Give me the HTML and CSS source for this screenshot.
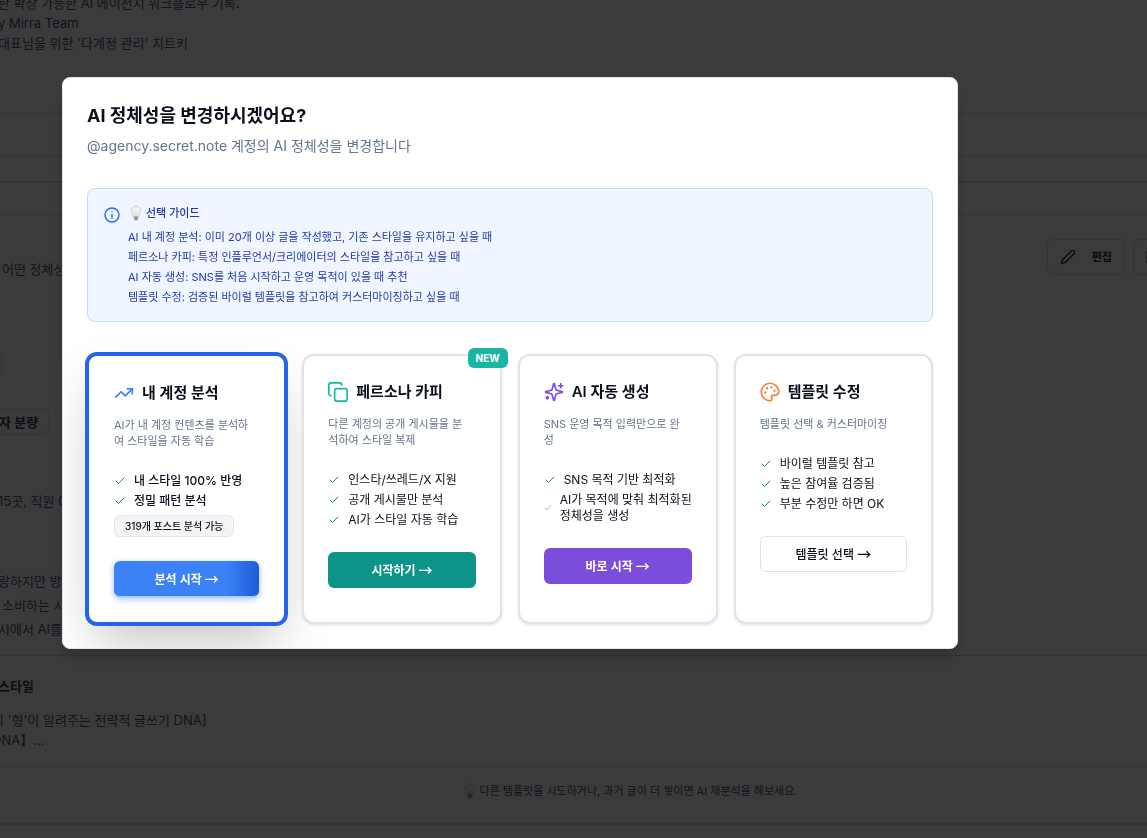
FILE: index.html
```html
<!DOCTYPE html>
<html lang="ko">

<head>
    <meta charset="UTF-8">
    <meta name="viewport" content="width=device-width, initial-scale=1.0">
    <title>AI 정체성 변경</title>
    <link rel="stylesheet" href="styles.css">
</head>

<body>

    <!-- shared icons -->
    <svg class="sprite" aria-hidden="true">
        <symbol id="check" viewBox="0 0 24 24"><path d="M20 6 9 17l-5-5"/></symbol>
        <symbol id="bulb" viewBox="0 0 24 32">
            <path d="M12 2a9 9 0 0 0-9 9c0 5 4 7 4 12h10c0-5 4-7 4-12a9 9 0 0 0-9-9z" fill="#f4f4f4" stroke="#bdbdbd" stroke-width="1.5"/>
            <path d="M9 12l2 10M15 12l-2 10" fill="none" stroke="#c8c8c8" stroke-width="1.2"/>
            <path d="M8 23h8v5l-2 3h-4l-2-3z" fill="#9b9b9b" stroke="none"/>
            <path d="M8 26h8" stroke="#6f6f6f" stroke-width="1"/>
        </symbol>
    </svg>

    <main class="page">
        <section class="intro">
            <p>한 확장 가능한 AI 에이전시 워크플로우 기록.</p>
            <p>y Mirra Team</p>
            <p>대표님을 위한 '다계정 관리' 치트키</p>
        </section>
        <div class="row row-tall"></div>
        <div class="row row-short"></div>
        <div class="row row-mid"></div>

        <section class="identity">
            <div class="identity-head">
                <p>어떤 정체성</p>
                <div class="actions">
                    <button type="button">
                        <svg class="icon" viewBox="0 0 24 24"><path d="M17 3a2.8 2.8 0 1 1 4 4L7.500 20.500 2 22l1.500-5.500z"/></svg>
                        편집
                    </button>
                    <button type="button" aria-label="저장">
                        <svg class="icon" viewBox="0 0 24 24"><path d="M2 4h20v16H2z"/></svg>
                    </button>
                </div>
            </div>
            <div class="tags">
                <span class="tag tag-cut"></span>
                <span class="tag">자 분량</span>
            </div>
            <p class="fact">15곳, 직원 0</p>
            <div class="story">
                <p>랑하지만 방향</p>
                <p class="inset">소비하는 시</p>
                <p>시에서 AI를</p>
            </div>
        </section>

        <section class="style">
            <h3>스타일</h3>
            <p>의 '형'이 알려주는 전략적 글쓰기 DNA]</p>
            <p>DNA】...</p>
        </section>

        <footer class="tip">
            <svg class="bulb"><use href="#bulb"/></svg>
            다른 템플릿을 시도하거나, 과거 글이 더 쌓이면 AI 재분석을 해보세요.
        </footer>
    </main>

    <div class="overlay">
        <div class="modal" role="dialog" aria-labelledby="modalTitle">
            <h2 id="modalTitle">AI 정체성을 변경하시겠어요?</h2>
            <p class="subtitle">@agency.secret.note 계정의 AI 정체성을 변경합니다</p>

            <div class="guide">
                <svg class="icon" viewBox="0 0 24 24"><circle cx="12" cy="12" r="10.500"/><path d="M12 17v-6M12 7.500v.01"/></svg>
                <div>
                    <h4><svg class="bulb"><use href="#bulb"/></svg>선택 가이드</h4>
                    <p>AI 내 계정 분석: 이미 20개 이상 글을 작성했고, 기존 스타일을 유지하고 싶을 때</p>
                    <p>페르소나 카피: 특정 인플루언서/크리에이터의 스타일을 참고하고 싶을 때</p>
                    <p>AI 자동 생성: SNS를 처음 시작하고 운영 목적이 있을 때 추천</p>
                    <p>템플릿 수정: 검증된 바이럴 템플릿을 참고하여 커스터마이징하고 싶을 때</p>
                </div>
            </div>

            <div class="cards">
                <article class="card selected">
                    <h3>
                        <svg class="icon blue" viewBox="0 0 24 24"><path d="M22 7l-8.500 8.500-5-5L2 17"/><path d="M16 7h6v6"/></svg>
                        내 계정 분석
                    </h3>
                    <p class="desc">AI가 내 계정 컨텐츠를 분석하<br>여 스타일을 자동 학습</p>
                    <ul class="strong">
                        <li><svg class="check"><use href="#check"/></svg>내 스타일 100% 반영</li>
                        <li><svg class="check"><use href="#check"/></svg>정밀 패턴 분석</li>
                    </ul>
                    <span class="count">319개 포스트 분석 가능</span>
                    <button type="button" class="btn btn-blue">분석 시작 <span class="arrow">→</span></button>
                </article>

                <article class="card">
                    <span class="new">NEW</span>
                    <h3>
                        <svg class="icon teal" viewBox="0 0 24 24"><rect x="8" y="8" width="15" height="15" rx="2.500"/><path d="M4 16.500c-1.400 0-3-1.400-3-3V4c0-1.600 1.400-3 3-3h9.500c1.600 0 3 1.400 3 3"/></svg>
                        페르소나 카피
                    </h3>
                    <p class="desc">다른 계정의 공개 게시물을 분<br>석하여 스타일 복제</p>
                    <ul>
                        <li><svg class="check"><use href="#check"/></svg>인스타/쓰레드/X 지원</li>
                        <li><svg class="check"><use href="#check"/></svg>공개 게시물만 분석</li>
                        <li><svg class="check"><use href="#check"/></svg>AI가 스타일 자동 학습</li>
                    </ul>
                    <button type="button" class="btn btn-teal">시작하기 <span class="arrow">→</span></button>
                </article>

                <article class="card">
                    <h3>
                        <svg class="icon purple" viewBox="0 0 24 24"><path d="M9.900 15.500A2 2 0 0 0 8.500 14.100l-6.100-1.600a.5.5 0 0 1 0-1L8.500 9.900A2 2 0 0 0 9.900 8.500l1.600-6.100a.5.5 0 0 1 1 0L14.100 8.500A2 2 0 0 0 15.500 9.900l6.100 1.600a.5.5 0 0 1 0 1L15.500 14.100a2 2 0 0 0-1.400 1.400l-1.600 6.100a.5.5 0 0 1-1 0z"/><path d="M20 2v5M22.500 4.500h-5"/><circle cx="4" cy="19" r="1.200"/></svg>
                        AI 자동 생성
                    </h3>
                    <p class="desc">SNS 운영 목적 입력만으로 완<br>성</p>
                    <ul>
                        <li><svg class="check"><use href="#check"/></svg>SNS 목적 기반 최적화</li>
                        <li><svg class="check check-small"><use href="#check"/></svg><span>AI가 목적에 맞춰 최적화된<br>정체성을 생성</span></li>
                    </ul>
                    <button type="button" class="btn btn-purple">바로 시작 <span class="arrow">→</span></button>
                </article>

                <article class="card">
                    <h3>
                        <svg class="icon orange" viewBox="0 0 24 24"><path d="M12 22.500a10.500 10.500 0 1 1 10.500-11c0 3-2.500 4.500-5 4.500h-2.200c-1.800 0-2.300 1.800-1.300 3 .9 1.200.5 3.500-2 3.500z"/><path d="M13.500 6.500v.01M17.500 10.500v.01M8.500 7.500v.01M6.500 12.500v.01" stroke-width="2.800"/></svg>
                        템플릿 수정
                    </h3>
                    <p class="desc">템플릿 선택 &amp; 커스터마이징</p>
                    <ul>
                        <li><svg class="check"><use href="#check"/></svg>바이럴 템플릿 참고</li>
                        <li><svg class="check"><use href="#check"/></svg>높은 참여율 검증됨</li>
                        <li><svg class="check"><use href="#check"/></svg>부분 수정만 하면 OK</li>
                    </ul>
                    <button type="button" class="btn btn-outline">템플릿 선택 <span class="arrow">→</span></button>
                </article>
            </div>
        </div>
    </div>

</body>

</html>
```

FILE: styles.css
```css
* {
    box-sizing: border-box;
}

body {
    margin: 0;
    overflow: hidden;
    background-color: #fff;
    color: #0a0f1c;
    font-family: Inter, "Noto Sans CJK KR", sans-serif;
    font-size: 12px;
    line-height: 16px;
}

h2, h3, h4, p, ul {
    margin: 0;
    padding: 0;
}

button {
    font: inherit;
    cursor: pointer;
}

svg {
    flex-shrink: 0;
    fill: none;
    stroke: currentColor;
    stroke-width: 2;
    stroke-linecap: round;
    stroke-linejoin: round;
}

.sprite {
    position: absolute;
    width: 0;
    height: 0;
}

.icon {
    width: 20px;
    height: 20px;
}

.bulb {
    width: 12px;
    height: 16px;
}

/* page behind the dialog, scrolled part way */
.page {
    margin-top: -7px;
    overflow: hidden;
    color: #475780;
    font-size: 13px;
    line-height: 20px;
    white-space: nowrap;
}

.page p {
    margin-left: -2px;
}

.intro {
    height: 121px;
    border-bottom: 1px solid #dcdcdc;
}

.row {
    border-bottom: 1px solid #dcdcdc;
}

.row-tall {
    height: 43px;
}

.row-short {
    height: 26px;
    border-bottom-width: 2px;
}

.row-mid {
    height: 32px;
}

.identity {
    padding-top: 24px;
    height: 441px;
    border-bottom: 1px solid #dcdcdc;
}

.identity-head {
    display: flex;
    justify-content: space-between;
    align-items: center;
    height: 36px;
}

.identity-head p {
    margin: 24px 0 0 2px;
}

.actions {
    display: flex;
    gap: 8px;
    margin-right: -28px;
}

.actions button {
    display: flex;
    align-items: center;
    gap: 16px;
    height: 36px;
    padding: 0 12px;
    border: 1px solid #dcdcdc;
    border-radius: 6px;
    background: none;
    color: #1f2f55;
    font-size: 11px;
    font-weight: 600;
}

.actions .icon {
    width: 16px;
    height: 16px;
}

.tags {
    display: flex;
    flex-direction: column;
    align-items: flex-start;
    gap: 32px;
    margin: 76px 0 0 -8px;
}

.tag {
    padding: 2px 10px 2px 6px;
    border: 1px solid #dcdcdc;
    border-radius: 6px;
    color: #2c3c64;
    font-weight: 600;
}

.tag-cut {
    height: 26px;
    padding: 0 4px;
}

.fact {
    padding-top: 56px;
}

.story {
    padding-top: 58px;
    line-height: 24px;
}

.page .inset {
    margin-left: 2px;
}

.style {
    height: 111px;
    padding-top: 20px;
    border-bottom: 1px solid #dcdcdc;
}

.style h3 {
    margin: 0 0 14px -2px;
    color: #2c3c64;
    font-size: 13px;
}

.page .style p {
    margin-left: -8px;
}

.tip {
    display: flex;
    justify-content: center;
    align-items: center;
    gap: 4px;
    height: 58px;
    padding: 0 16px 8px 130px;
    border-bottom: 2px solid #dcdcdc;
    font-size: 11px;
}

/* dialog */
.overlay {
    position: fixed;
    inset: 0;
    padding: 77px 62px;
    background-color: rgba(0, 0, 0, 0.77);
}

.modal {
    max-width: 896px;
    padding: 24px;
    border: 1px solid #e2e4f0;
    border-radius: 8px;
    background-color: #fff;
    box-shadow: 0 10px 15px -3px rgba(0, 0, 0, 0.2);
    overflow: hidden;
}

.modal h2 {
    font-size: 18px;
    line-height: 28px;
    font-weight: 700;
}

.subtitle {
    margin-top: 6px;
    color: #64748b;
    font-size: 14px;
    line-height: 20px;
}

.guide {
    display: flex;
    gap: 8px;
    margin: 32px 0;
    padding: 16px 16px 14px;
    border: 1px solid #bfdbfe;
    border-radius: 8px;
    background-color: #eff6ff;
    color: #2438a8;
    font-size: 11px;
}

.guide .icon {
    width: 16px;
    height: 16px;
    margin-top: 2px;
    color: #2563eb;
}

.guide h4 {
    display: flex;
    gap: 4px;
    align-items: center;
    margin: 0 0 6px 2px;
    font-size: 11px;
    line-height: 16px;
    font-weight: 500;
}

.guide p {
    line-height: 20px;
}

.cards {
    display: grid;
    grid-template-columns: repeat(4, 1fr);
    gap: 16px;
}

.card {
    position: relative;
    padding: 24px 24px 26px;
    border: 2px solid #e2e2ee;
    border-radius: 12px;
    background-color: #fff;
    box-shadow: 0 1px 3px rgba(0, 0, 0, 0.12);
}

.card.selected {
    margin: -2px;
    padding: 25px;
    border: 4px solid #2563eb;
    box-shadow: 0 25px 50px -12px rgba(0, 0, 0, 0.25);
}

.card h3 {
    display: flex;
    align-items: center;
    gap: 8px;
    margin-bottom: 12px;
    font-size: 15px;
    line-height: 24px;
    font-weight: 600;
}

.blue { color: #3b82f6; }
.teal { color: #14b8a6; }
.purple { color: #7c4ddb; }
.orange { color: #f97f36; }

.desc {
    color: #64748b;
    font-size: 11px;
    white-space: nowrap;
}

.card ul {
    display: flex;
    flex-direction: column;
    gap: 4px;
    margin-top: 24px;
    list-style: none;
    white-space: nowrap;
}

.card li {
    display: flex;
    align-items: center;
    gap: 8px;
}

.strong {
    font-weight: 500;
}

.check {
    width: 12px;
    height: 12px;
    color: #16934a;
}

.check-small {
    width: 8px;
    height: 8px;
    color: #7d8a86;
}

.count {
    display: inline-block;
    margin-top: 6px;
    padding: 2px 10px;
    border: 1px solid #e2e4ea;
    border-radius: 6px;
    background-color: #f3f4f6;
    font-size: 10px;
    font-weight: 500;
}

.new {
    position: absolute;
    top: -8px;
    right: -8px;
    padding: 2px 8px;
    border-radius: 6px;
    background-color: #1ab6a3;
    color: #fff;
    font-size: 10px;
    font-weight: 700;
}

.btn {
    display: block;
    width: 100%;
    height: 36px;
    margin-top: 24px;
    padding: 0;
    border: none;
    border-radius: 6px;
    color: #fff;
    font-size: 12px;
    font-weight: 600;
}

.arrow {
    font-family: "Noto Sans CJK KR", sans-serif;
    font-size: 14px;
    font-weight: 500;
    line-height: 16px;
}

.btn-blue {
    background: linear-gradient(90deg, #3b82f6 78%, #1d5bd8);
    box-shadow: inset 0 -2px 0 -1px #a9c9ff, 0 2px 6px rgba(59, 130, 246, 0.5);
}

.btn-teal {
    background-color: #0d9488;
}

.btn-purple {
    background-color: #7c4ddb;
}

.btn-outline {
    border: 1px solid #e2e2ee;
    background-color: #fff;
    color: #0a0f1c;
    font-weight: 500;
}
```
